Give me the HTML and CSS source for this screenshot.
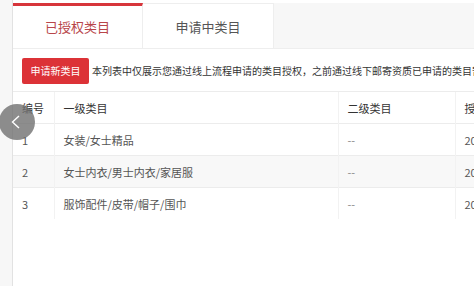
FILE: index.html
```html
<!DOCTYPE html>
<html lang="zh-CN">
<head>
<meta charset="utf-8">
<title>类目管理</title>
<link rel="stylesheet" href="styles.css">
</head>
<body>
<div class="page">
  <div class="gutter"></div>
  <div class="panel">
    <div class="tabs">
      <div class="tab active">已授权类目</div>
      <div class="tab">申请中类目</div>
    </div>
    <div class="content">
      <div class="toolbar">
        <button class="btn-apply">申请新类目</button>
        <span class="notice">本列表中仅展示您通过线上流程申请的类目授权，之前通过线下邮寄资质已申请的类目暂不在此展示</span>
      </div>
      <table class="grid">
        <colgroup>
          <col class="c-no"><col class="c-l1"><col class="c-l2"><col class="c-date">
        </colgroup>
        <thead>
          <tr><th>编号</th><th>一级类目</th><th>二级类目</th><th>授权时间</th></tr>
        </thead>
        <tbody>
          <tr><td>1</td><td>女装/女士精品</td><td class="muted">--</td><td>2018-01-01</td></tr>
          <tr class="alt"><td>2</td><td>女士内衣/男士内衣/家居服</td><td class="muted">--</td><td>2018-01-01</td></tr>
          <tr><td>3</td><td>服饰配件/皮带/帽子/围巾</td><td class="muted">--</td><td>2018-01-01</td></tr>
        </tbody>
      </table>
    </div>
  </div>
</div>
<div class="nav-prev">
  <svg width="36" height="36" viewBox="0 0 36 36"><polyline points="20,12 13.5,18 20,24" fill="none" stroke="#fff" stroke-width="1.4"/></svg>
</div>
</body>
</html>
```
FILE: styles.css
```css
html, body {
  margin: 0;
  padding: 0;
  background: #fff;
  font-family: "Noto Sans CJK SC", "Noto Sans", sans-serif;
  color: #333;
}
.page {
  display: flex;
  width: 474px;
  height: 286px;
  overflow: hidden;
}
.gutter {
  width: 12px;
  flex: none;
  background: #f7f7f7;
}
.panel {
  flex: 1;
  min-width: 0;
  border-left: 1px solid #e2e2e2;
  overflow: hidden;
}
.tabs {
  display: flex;
  margin-top: 3px;
  height: 45px;
  background: #f7f7f7;
  border-bottom: 1px solid #eeeeee;
}
.tab {
  width: 131px;
  display: flex;
  align-items: center;
  justify-content: center;
  background: #fff;
  font-size: 13px;
  line-height: 16px;
  color: #555;
  box-sizing: border-box;
  border-top: 1px solid #eeeeee;
  border-right: 1px solid #eeeeee;
  padding-top: 2px;
}
.tab.active {
  width: 130px;
  border-top: 3px solid #d7353b;
  color: #b8464a;
  padding-top: 0;
}
.content {
  padding-top: 9px;
}
.toolbar {
  display: flex;
  align-items: center;
  padding-left: 9px;
  padding-bottom: 7px;
  white-space: nowrap;
}
.btn-apply {
  height: 26px;
  width: 67px;
  padding: 0;
  border: none;
  border-radius: 2px;
  background: #dc3237;
  color: #fff;
  font-family: inherit;
  font-size: 10px;
  line-height: 12px;
  flex: none;
}
.notice {
  margin-left: 3px;
  font-size: 10px;
  line-height: 12px;
  color: #333;
}
.grid {
  width: 600px;
  border-collapse: collapse;
  table-layout: fixed;
  font-size: 11px;
  line-height: 14px;
}
.c-no { width: 41px; }
.c-l1 { width: 284px; }
.c-l2 { width: 117px; }
.c-date { width: 158px; }
.grid th, .grid td {
  height: 31px;
  padding: 0 0 0 9px;
  text-align: left;
  font-weight: normal;
  border-top: 1px solid #ececec;
  border-left: 1px solid #f2f2f2;
  white-space: nowrap;
  overflow: hidden;
}
.grid th:first-child, .grid td:first-child {
  border-left: none;
}
.grid th { color: #333; height: 31px; }
.grid td { color: #555; }
.grid td.muted { color: #888; }
.grid tr.alt td { background: #f8f8f8; }
.nav-prev {
  position: absolute;
  left: -1px;
  top: 104px;
  width: 36px;
  height: 36px;
  border-radius: 50%;
  background: rgba(112, 112, 112, 0.8);
}
.nav-prev svg { display: block; }
```
